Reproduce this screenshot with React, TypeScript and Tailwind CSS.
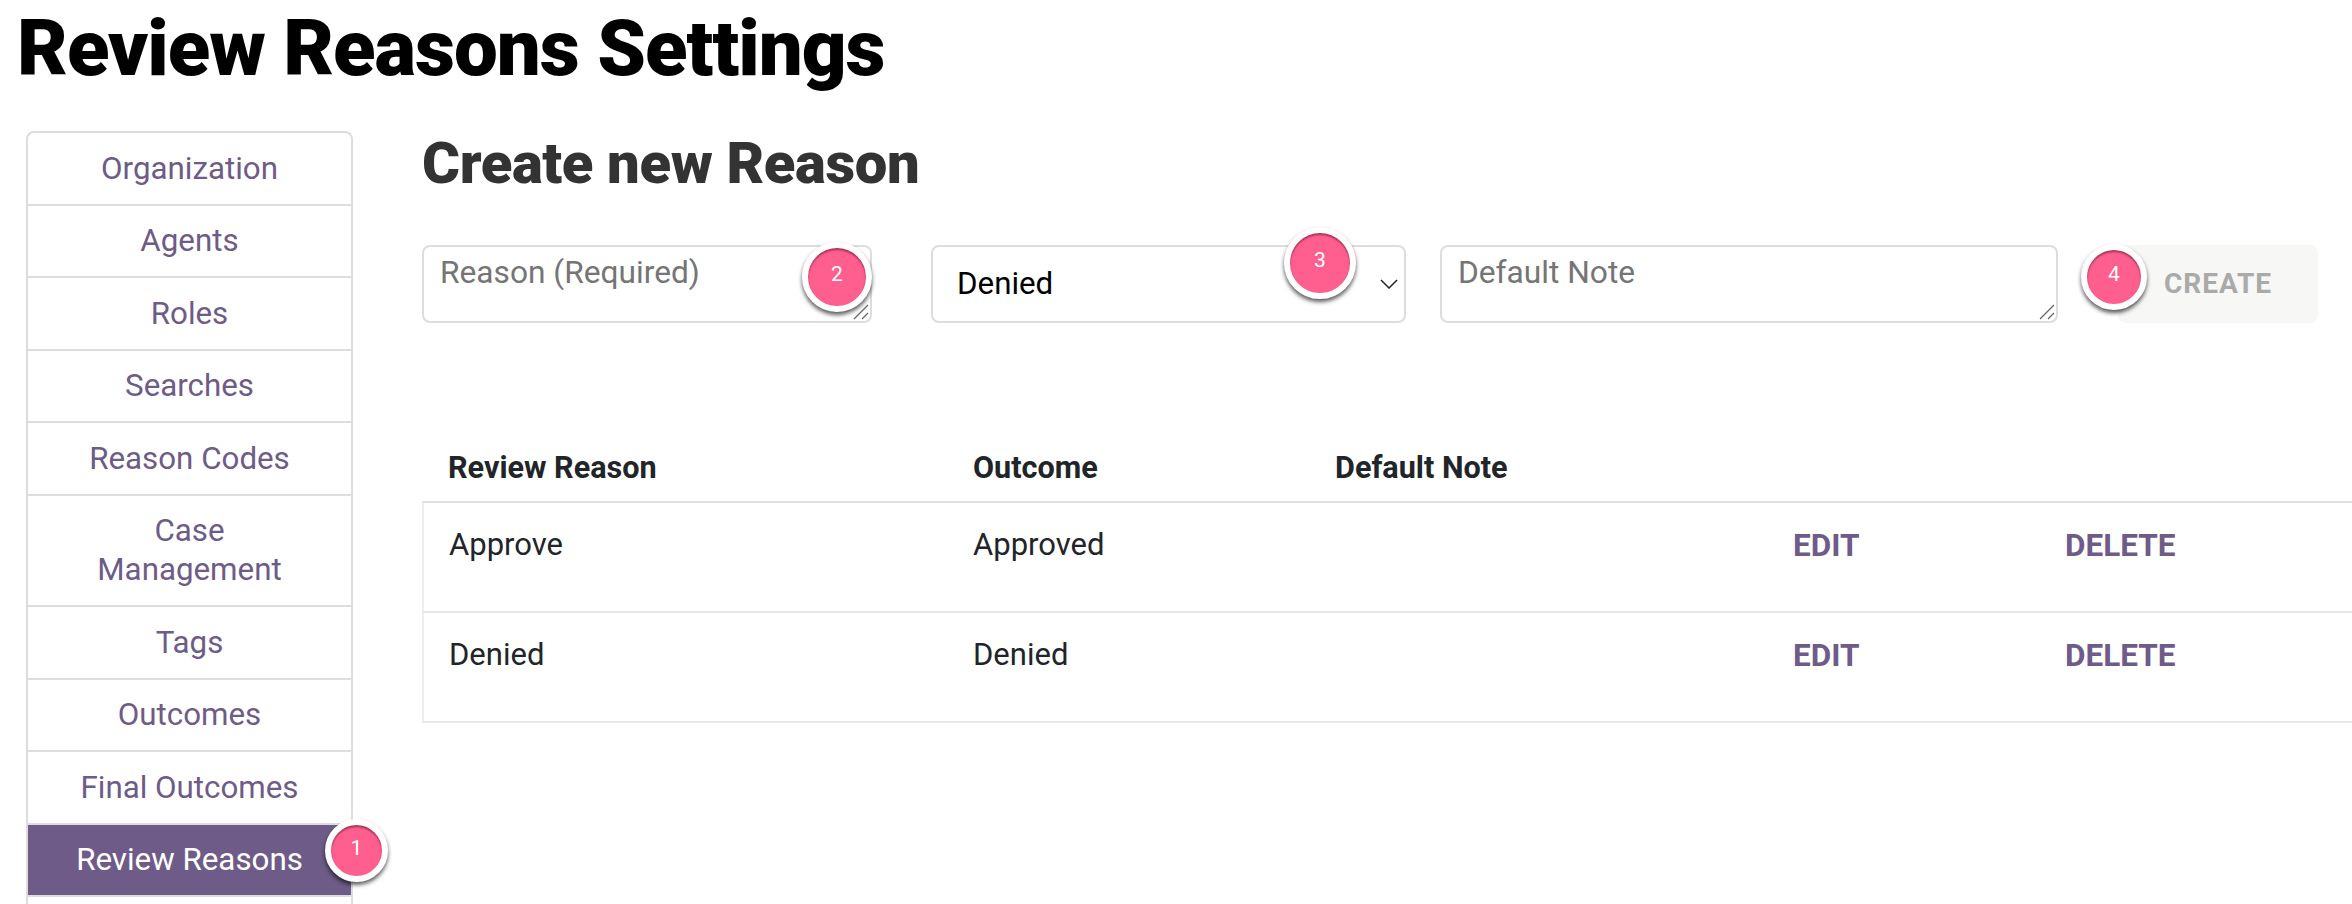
const navItems = [
  'Organization',
  'Agents',
  'Roles',
  'Searches',
  'Reason Codes',
  'Case Management',
  'Tags',
  'Outcomes',
  'Final Outcomes',
  'Review Reasons',
];

const rows = [
  { reason: 'Approve', outcome: 'Approved' },
  { reason: 'Denied', outcome: 'Denied' },
];

function Badge({ label, className }: { label: string; className: string }) {
  return (
    <span
      className={`absolute z-10 flex items-center justify-center rounded-full border-[6px] border-white bg-[#fe5f8f] pb-1 text-[21px] text-white shadow-[0_3px_4px_rgba(0,0,0,0.65),inset_0_2px_2px_rgba(110,20,50,0.6)] ${className}`}
    >
      {label}
    </span>
  );
}

// the mac style drag corner of a textarea
function Grip() {
  return (
    <svg
      viewBox="0 0 16 16"
      className="pointer-events-none absolute bottom-[3px] right-[3px] h-[16px] w-[16px] fill-none stroke-[#666666] stroke-[1.25]"
    >
      <path d="M1 15L15 1M9 15l6-6" />
    </svg>
  );
}

export default function App() {
  return (
    <div className="h-[904px] overflow-hidden bg-white font-['Roboto',sans-serif]">
      <h1 className="pl-[17px] pt-[2px] text-[78px] leading-[94px] font-black tracking-[-1px] text-black">
        Review Reasons Settings
      </h1>

      <div className="mt-[35px] flex">
        {/* Sidebar */}
        <nav className="ml-[26px] w-[327px] shrink-0 rounded-t-lg border-2 border-b-0 border-[#dddddd]">
          {navItems.map((item) => (
            <div
              key={item}
              className={
                item === 'Review Reasons'
                  ? 'relative flex min-h-[72px] items-center justify-center border-b-2 border-[#dddddd] bg-[#6e5b88] px-[40px] py-[15.75px] text-center text-[31.3px] leading-[39px] text-white'
                  : 'flex min-h-[72.5px] items-center justify-center border-b-2 border-[#dddddd] px-[40px] py-[15.75px] text-center text-[31.3px] leading-[39px] text-[#6e5b88]'
              }
            >
              {item}
              {item === 'Review Reasons' && <Badge label="1" className="right-[-37px] top-[-6px] h-[63px] w-[63px]" />}
            </div>
          ))}
          <div className="h-[72px]" />
        </nav>

        {/* Main */}
        <main className="ml-[69px] min-w-0 flex-1">
          <h2 className="text-[58px] leading-[64px] font-black tracking-[-0.4px] text-[#333333]">Create new Reason</h2>

          <div className="mt-[50px] flex h-[78px] items-stretch">
            <div className="relative w-[450px]">
              <textarea
                placeholder="Reason (Required)"
                className="h-full w-full resize-none rounded-lg border-2 border-[#dddddd] px-4 py-[2px] text-[31.7px] leading-[48px] placeholder:text-[#757575]"
              />
              <Grip />
              <Badge label="2" className="right-[0px] top-[-3px] h-[70px] w-[70px]" />
            </div>
            <div className="relative ml-[59px] w-[475px]">
              <select
                defaultValue="Denied"
                className="h-full w-full appearance-none rounded-lg border-2 border-[#dddddd] bg-white px-[24px] text-[31.3px] text-black"
              >
                <option>Approved</option>
                <option>Denied</option>
              </select>
              <svg
                viewBox="0 0 18 10"
                className="pointer-events-none absolute right-[8px] top-[34px] h-[10px] w-[18px] fill-none stroke-[#222222] stroke-[1.5]"
              >
                <path d="M1 1l8 8 8-8" />
              </svg>
              <Badge label="3" className="right-[50px] top-[-18px] h-[72px] w-[72px]" />
            </div>
            <div className="relative ml-[34px] w-[618px]">
              <textarea
                placeholder="Default Note"
                className="h-full w-full resize-none rounded-lg border-2 border-[#dddddd] px-4 py-[2px] text-[31.7px] leading-[48px] placeholder:text-[#757575]"
              />
              <Grip />
            </div>
            <div className="relative ml-[60px] w-[200px]">
              <button className="h-full w-full rounded-lg bg-[#f7f7f5] text-[28px] font-bold tracking-[1px] text-[#aaaaaa]">
                CREATE
              </button>
              <Badge label="4" className="left-[-37px] top-[-1px] h-[66px] w-[66px]" />
            </div>
          </div>

          <table className="mt-[101px] w-[1960px] table-fixed border-collapse text-left text-[31px] text-[#212529]">
            <thead>
              <tr className="h-[78px] border-b-2 border-[#dee2e6]">
                <th className="w-[525px] pl-[25px] pt-[10px] text-[30.6px] font-bold">Review Reason</th>
                <th className="w-[362px] pl-[25px] pt-[10px] text-[30.6px] font-bold">Outcome</th>
                <th className="w-[458px] pl-[25px] pt-[10px] text-[30.6px] font-bold">Default Note</th>
                <th className="w-[272px]" />
                <th />
              </tr>
            </thead>
            <tbody className="border-l-2 border-[#eeeeee]">
              {rows.map((row) => (
                <tr key={row.reason} className="h-[110px] border-b-2 border-[#e6e8ea] align-top">
                  <td className="pl-[25px] pt-[19px]">{row.reason}</td>
                  <td className="pl-[25px] pt-[19px]">{row.outcome}</td>
                  <td />
                  <td className="pl-[25px] pt-[19px] text-[31.5px] font-bold text-[#6e5b88]">EDIT</td>
                  <td className="pl-[25px] pt-[19px] text-[31.5px] font-bold text-[#6e5b88]">DELETE</td>
                </tr>
              ))}
            </tbody>
          </table>
        </main>
      </div>
    </div>
  );
}
